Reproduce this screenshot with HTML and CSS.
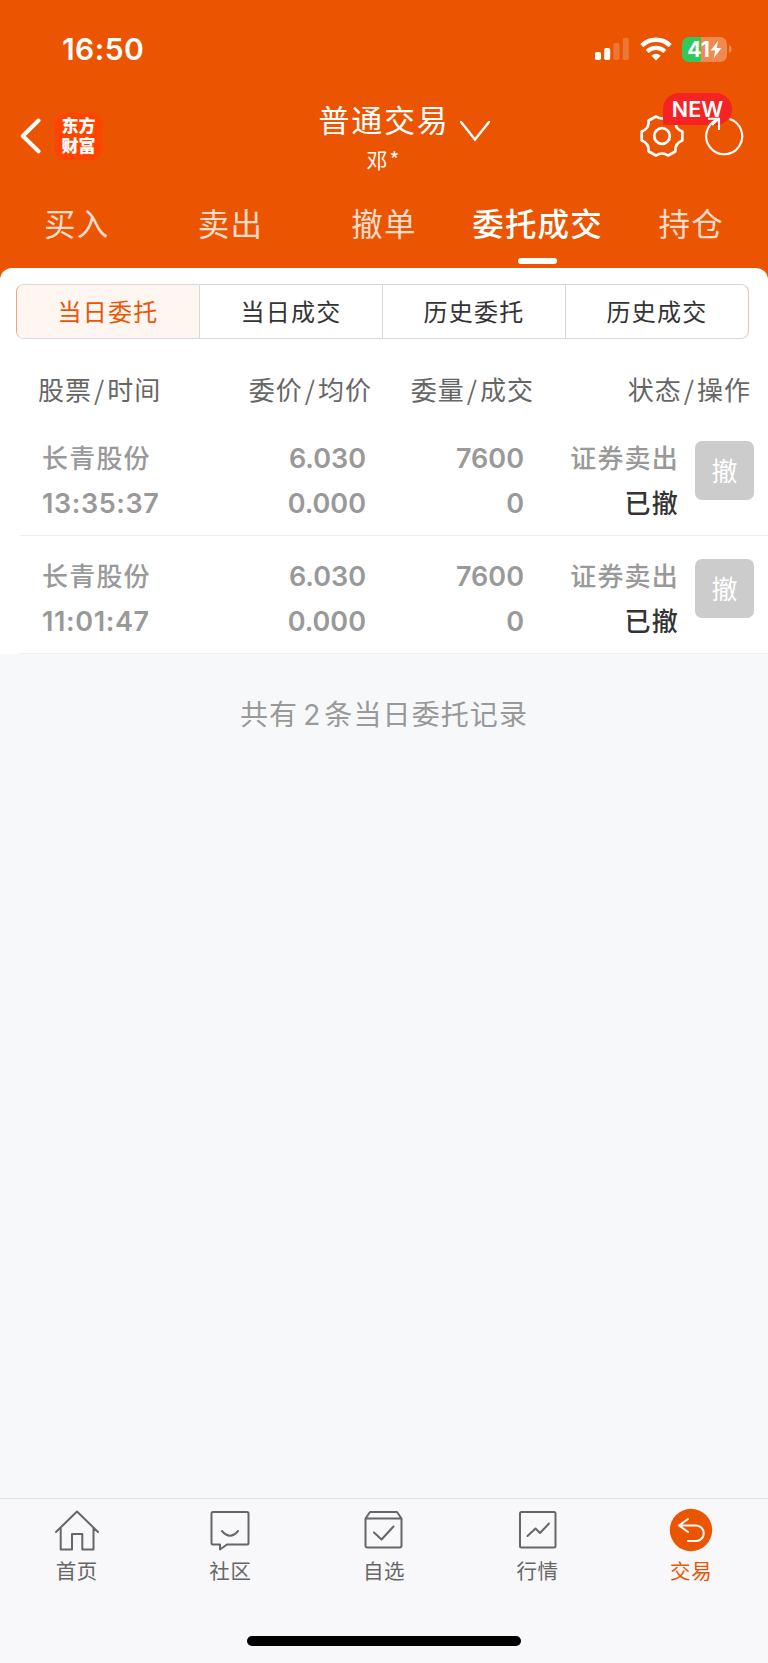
FILE: index.html
```html
<!DOCTYPE html>
<html lang="zh-CN">
<head>
    <meta charset="UTF-8">
    <meta name="viewport" content="width=device-width, initial-scale=1.0">
    <title>普通交易</title>
    <link rel="stylesheet" href="styles.css">
</head>
<body>

<header>
    <div class="status-bar">
        <span class="time">16:50</span>
        <div class="status-icons">
            <svg class="signal" width="34" height="24" viewBox="0 0 34 24" fill="#fff">
                <rect x="0" y="15" width="6" height="8" rx="1.8"/>
                <rect x="9.2" y="11" width="6" height="12" rx="1.8"/>
                <rect x="18.5" y="6" width="6" height="17" rx="1.8" opacity=".2"/>
                <rect x="27.8" y="1" width="6" height="22" rx="1.8" opacity=".2"/>
            </svg>
            <svg class="wifi" width="32" height="24" viewBox="0 0 32 24">
                <path d="M1.8 8.6a20.3 20.3 0 0 1 28.4 0" fill="none" stroke="#fff" stroke-width="4.4"/>
                <path d="M7.2 14.4a12.6 12.6 0 0 1 17.6 0" fill="none" stroke="#fff" stroke-width="4.2"/>
                <path d="M11.3 18.7a6.8 6.8 0 0 1 9.4 0L16 23.4z" fill="#fff"/>
            </svg>
            <div class="battery">
                <span class="battery-level">41</span>
                <svg width="12" height="17" viewBox="0 0 12 17"><path d="M8 0L.5 9.4h4.700L3.800 17 11.500 7H6.700z" fill="#fff"/></svg>
            </div>
            <svg class="battery-cap" width="3" height="8" viewBox="0 0 3 8"><path d="M0 0c3.600 1.200 3.600 6.800 0 8z" fill="#f18a51"/></svg>
        </div>
    </div>

    <div class="title-bar">
        <div class="title-left">
            <svg width="22" height="36" viewBox="0 0 22 36"><path d="M18.500 2.500L2.800 18l15.700 15.300" fill="none" stroke="#fff" stroke-width="4" stroke-linecap="round" stroke-linejoin="round"/></svg>
            <div class="app-logo">东方<br>财富</div>
        </div>
        <div class="title-center">
            <div class="title">
                <span>普通交易</span>
                <svg width="32" height="22" viewBox="0 0 32 22"><path d="M2 2l14 17.500L30 2" fill="none" stroke="#fff" stroke-width="2.400" stroke-linecap="round"/></svg>
            </div>
            <div class="account">邓<i>*</i></div>
        </div>
        <div class="title-right">
            <svg class="gear" width="46" height="46" viewBox="-23 -23 46 46" fill="none" stroke="#fff" stroke-width="2.700" stroke-linejoin="round">
                <path d="M-6 -19.500Q0 -15.500 6 -19.500L13.300 -15.500Q12.500 -7.500 20.300 -4.500V4.500Q12.500 7.500 13.300 15.500L6 19.500Q0 15.500 -6 19.500L-13.300 15.500Q-12.500 7.500 -20.300 4.500V-4.500Q-12.500 -7.500 -13.300 -15.500Z"/>
                <circle r="7.800"/>
            </svg>
            <span class="new-badge">NEW</span>
            <svg class="refresh" width="40" height="42" viewBox="-20 -21 40 42" fill="none" stroke="#fff" stroke-width="2.100">
                <path d="M5.500 -17A18 18 0 1 1 -6.500 -16.500"/>
                <path d="M-16 -17.300H-5V-6M-5 -17.300L-12 -11"/>
            </svg>
        </div>
    </div>

    <nav class="tabs">
        <a>买入</a>
        <a>卖出</a>
        <a>撤单</a>
        <a class="active">委托成交</a>
        <a>持仓</a>
    </nav>
</header>

<main>
    <div class="card">
        <div class="segments">
            <button class="active">当日委托</button>
            <button>当日成交</button>
            <button>历史委托</button>
            <button>历史成交</button>
        </div>

        <div class="table-head">
            <span>股票<i>/</i>时间</span>
            <span>委价<i>/</i>均价</span>
            <span>委量<i>/</i>成交</span>
            <span>状态<i>/</i>操作</span>
        </div>

        <div class="order">
            <div class="col"><span class="name">长青股份</span><span class="num">13:35:37</span></div>
            <div class="col"><span class="num">6.030</span><span class="num">0.000</span></div>
            <div class="col"><span class="num">7600</span><span class="num">0</span></div>
            <div class="col"><span class="name">证券卖出</span><span class="state">已撤</span></div>
            <button class="cancel-btn">撤</button>
        </div>
        <div class="order">
            <div class="col"><span class="name">长青股份</span><span class="num">11:01:47</span></div>
            <div class="col"><span class="num">6.030</span><span class="num">0.000</span></div>
            <div class="col"><span class="num">7600</span><span class="num">0</span></div>
            <div class="col"><span class="name">证券卖出</span><span class="state">已撤</span></div>
            <button class="cancel-btn">撤</button>
        </div>
    </div>
    <p class="summary">共有<b>2</b>条当日委托记录</p>
</main>

<footer>
    <nav class="bottom-nav">
        <a>
            <svg width="46" height="46" viewBox="0 0 46 46"><path d="M2 25L23 4.500 44 25M6.700 21V42.500h11.300V27h10.300v15.500H39.500V21"/></svg>
            <span>首页</span>
        </a>
        <a>
            <svg width="46" height="46" viewBox="0 0 46 46"><path d="M6 5h34a1.500 1.500 0 0 1 1.500 1.500V36a1.500 1.500 0 0 1-1.500 1.500H20L13 42.500V37.500H6a1.500 1.500 0 0 1-1.500-1.500V6.500A1.500 1.500 0 0 1 6 5zM15 24q8 9.500 16 0"/></svg>
            <span>社区</span>
        </a>
        <a>
            <svg width="46" height="46" viewBox="0 0 46 46"><path d="M4.500 11.500l4.500-6.500h27L40.500 11.500V38.500a2 2 0 0 1-2 2H6.500a2 2 0 0 1-2-2zM4.500 11.500H40.500M13 25.500l7.500 7L32.500 19.500"/></svg>
            <span>自选</span>
        </a>
        <a>
            <svg width="46" height="46" viewBox="0 0 46 46"><rect x="5" y="5" width="35.500" height="35.500" rx="1.500"/><path d="M12.500 29l8-7.500 4.500 4.500L34 16.500"/></svg>
            <span>行情</span>
        </a>
        <a class="active">
            <svg width="46" height="46" viewBox="0 0 46 46"><circle cx="23" cy="23" r="21.200"/><path d="M20 12l-9 6.500 9 6.500M11.500 18.500H28a7.700 7.700 0 0 1 0 15.500H20"/></svg>
            <span>交易</span>
        </a>
    </nav>
    <div class="home-indicator"></div>
</footer>

</body>
</html>
```
FILE: styles.css
```css
* {
    box-sizing: border-box;
}

body {
    font-family: "Noto Sans CJK SC", sans-serif;
    margin: 0;
    background: #f7f8fa;
    min-height: 1663px;
    display: flex;
    flex-direction: column;
}

button {
    font-family: inherit;
    border: none;
    padding: 0;
    background: none;
}

header {
    background: #eb5502;
    color: white;
    height: 280px;
}

/* status bar */
.status-bar {
    height: 98px;
    padding: 0 36px 0 62px;
    display: flex;
    justify-content: space-between;
    align-items: center;
}

.time {
    font-family: Inter, sans-serif;
    font-size: 30px;
    font-weight: 600;
    letter-spacing: 0.4px;
}

.status-icons {
    display: flex;
    align-items: center;
}

.wifi {
    margin-left: 11px;
}

.battery {
    margin-left: 10px;
    width: 45px;
    height: 25px;
    border-radius: 7px;
    background: linear-gradient(to right, #34c759 19px, #f18a51 19px);
    display: flex;
    align-items: center;
    justify-content: center;
}

.battery-level {
    font-family: Inter, sans-serif;
    font-size: 21px;
    font-weight: 700;
    line-height: 25px;
}

.battery-cap {
    margin-left: 2px;
}

/* title bar */
.title-bar {
    height: 97px;
    padding: 0 24px 0 20px;
    display: grid;
    grid-template-columns: 1fr 220px 1fr;
}

.title-left {
    display: flex;
    align-items: center;
    height: 76px;
    gap: 13px;
}

.app-logo {
    width: 47px;
    height: 47px;
    border-radius: 10px;
    background: #ff4400;
    font-size: 17px;
    font-weight: 900;
    line-height: 20px;
    padding-top: 2px;
    text-align: center;
}

.title-center {
    text-align: center;
}

.title {
    display: flex;
    justify-content: center;
    padding-left: 45px;
    font-size: 31px;
    letter-spacing: 1.8px;
    line-height: 42px;
    white-space: nowrap;
}

.title svg {
    flex: none;
    margin: 22px 0 0 9px;
}

.account {
    font-size: 21px;
    line-height: 30px;
    margin: 2px 0 0 2px;
}

.account i {
    font-style: normal;
    margin-left: 2px;
}

.title-right {
    position: relative;
    display: flex;
    justify-content: flex-end;
    align-items: center;
    height: 76px;
    gap: 19px;
}

.new-badge {
    position: absolute;
    right: 12px;
    top: -5px;
    width: 69px;
    height: 32px;
    border-radius: 16px 16px 16px 0;
    background: #f52323;
    font-family: Inter, sans-serif;
    font-size: 21.5px;
    font-weight: 600;
    line-height: 32px;
    text-align: center;
}

.refresh {
    position: relative;
}

/* tabs */
.tabs {
    display: grid;
    grid-template-columns: repeat(5, 1fr);
    height: 73px;
}

.tabs a {
    display: flex;
    flex-direction: column;
    align-items: center;
    color: #fbdccb;
    font-size: 31.5px;
    letter-spacing: 1.2px;
    line-height: 54px;
}

.tabs .active {
    color: white;
    font-weight: 500;
}

.tabs .active::after {
    content: "";
    width: 39px;
    height: 6px;
    margin-top: 9px;
    border-radius: 3px;
    background: white;
}

/* order list */
main {
    flex: 1;
    margin-top: -12px;
}

.card {
    background: white;
    border-radius: 12px 12px 0 0;
    padding-top: 16px;
}

.segments {
    display: grid;
    grid-template-columns: 182px 183px 183px 1fr;
    height: 55px;
    margin: 0 19px 0 16px;
    border: 1px solid #d5d8df;
    border-left-color: #eba583;
    border-right-color: #e3c5b8;
    border-radius: 8px;
    overflow: hidden;
}

.segments button {
    color: #333;
    font-size: 24px;
    letter-spacing: 1.2px;
    padding-bottom: 2px;
}

.segments button + button {
    border-left: 1px solid #d5d8df;
}

.segments .active {
    background: #fff5f1;
    color: #eb5502;
}

.table-head {
    display: grid;
    grid-template-columns: 140px 194px 162px 1fr;
    height: 79px;
    padding: 0 17px 0 38px;
    color: #666;
    font-size: 26px;
    letter-spacing: 1px;
    line-height: 99px;
    text-align: right;
}

.table-head span:first-child {
    text-align: left;
}

.table-head i {
    font-style: normal;
    margin: 0 2px;
}

.order {
    display: grid;
    grid-template-columns: 140px 184px 158px 155px 1fr;
    height: 118px;
    margin-left: 20px;
    padding: 18px 14px 0 22px;
    border-bottom: 1px solid #eeeff1;
}

.col {
    display: flex;
    flex-direction: column;
    align-items: flex-end;
    color: #999;
    font-size: 26px;
    line-height: 45px;
}

.col:first-child {
    align-items: flex-start;
}

.name,
.state {
    font-weight: 500;
    letter-spacing: 1.2px;
    margin: -2px 0 2px;
}

.num {
    font-family: Inter, sans-serif;
    font-size: 27px;
    font-weight: 600;
}

.col:first-child .num {
    letter-spacing: 0.6px;
}

.state {
    color: #333;
}

.cancel-btn {
    justify-self: end;
    width: 59px;
    height: 59px;
    margin-top: 5px;
    border-radius: 7px;
    background: #ccc;
    color: white;
    font-size: 26px;
    padding-bottom: 3px;
}

.summary {
    margin: 37px 0 0;
    color: #999;
    font-size: 28px;
    letter-spacing: 1.1px;
    line-height: 44px;
    text-align: center;
}

.summary b {
    font-family: Inter, sans-serif;
    font-weight: normal;
    margin: 0 3px 0 5px;
}

/* bottom navigation */
footer {
    height: 165px;
    background: #f8f8fa;
    border-top: 1px solid #dedee0;
}

.bottom-nav {
    display: grid;
    grid-template-columns: repeat(5, 1fr);
    height: 137px;
    padding-top: 8px;
}

.bottom-nav a {
    display: flex;
    flex-direction: column;
    align-items: center;
    color: #666;
    font-size: 20.5px;
    letter-spacing: 0.6px;
    line-height: 34px;
}

.bottom-nav svg {
    fill: none;
    stroke: #666;
    stroke-width: 2;
    stroke-linejoin: round;
    stroke-linecap: round;
}

.bottom-nav .active {
    color: #eb5502;
}

.bottom-nav .active svg {
    stroke: white;
}

.bottom-nav .active circle {
    fill: #eb5502;
    stroke: none;
}

.home-indicator {
    width: 274px;
    height: 10px;
    margin: 0 auto;
    border-radius: 5px;
    background: black;
}
```
